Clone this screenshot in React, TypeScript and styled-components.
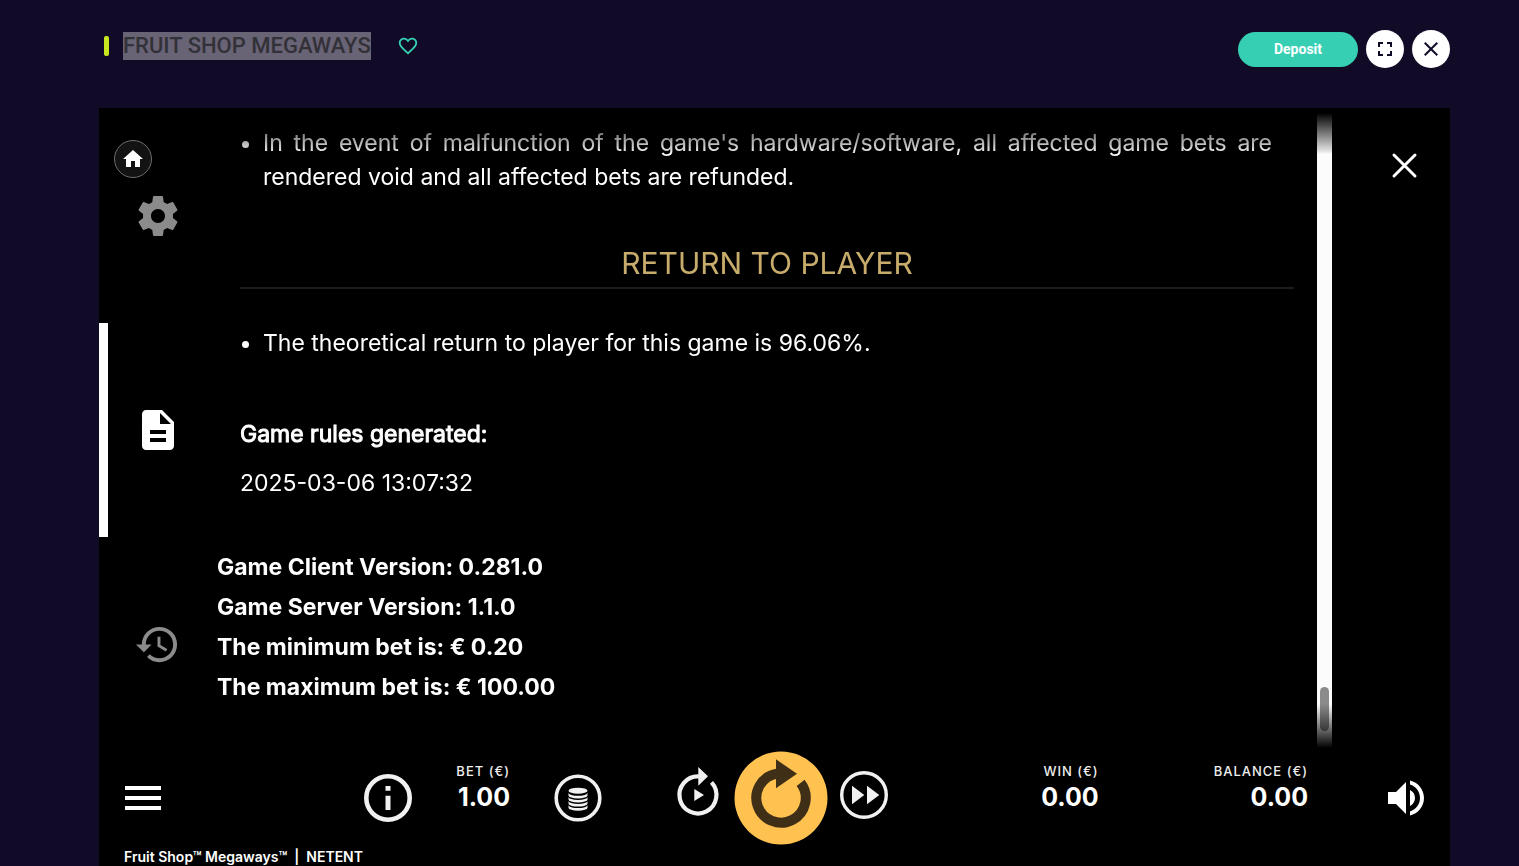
import React from "react";
import styled, { createGlobalStyle } from "styled-components";
import {
  MdClose,
  MdDescription,
  MdFavoriteBorder,
  MdFullscreen,
  MdHistory,
  MdHome,
  MdMenu,
  MdVolumeUp,
} from "react-icons/md";

const GlobalStyle = createGlobalStyle`
  * { box-sizing: border-box; }
  body {
    margin: 0;
    background: #120b28;
    color: #fff;
    font-family: Inter, "Liberation Sans", sans-serif;
  }
  button {
    padding: 0;
    border: 0;
    background: none;
    color: inherit;
    font: inherit;
    cursor: pointer;
  }
  svg { display: block; }
`;

const Page = styled.div`
  display: flex;
  flex-direction: column;
  min-height: 100vh;
  padding: 0 69px 0 99px;
`;

const Header = styled.header`
  display: flex;
  justify-content: space-between;
  align-items: flex-start;
  height: 108px;
  padding: 30px 0 0 5px;
  font-family: Roboto, "Liberation Sans", sans-serif;
`;

const TitleGroup = styled.div`
  display: flex;
  align-items: center;
  height: 32px;
`;

const Accent = styled.span`
  width: 5px;
  height: 20px;
  margin-right: 14px;
  border-radius: 2px;
  background: #c8e71f;
`;

const Title = styled.h1`
  margin: 0 26px 0 0;
  background: #686375;
  color: #333138;
  font-size: 22px;
  font-weight: 500;
  line-height: 28px;
`;

const FavoriteButton = styled.button`
  color: #36cfb4;
`;

const HeaderActions = styled.div`
  display: flex;
  align-items: center;
  gap: 8px;
`;

const DepositButton = styled.button`
  width: 120px;
  height: 35px;
  border-radius: 18px;
  background: #36cfb4;
  font-size: 14px;
  font-weight: 700;
`;

const CircleButton = styled.button`
  display: grid;
  place-items: center;
  width: 38px;
  height: 38px;
  border-radius: 50%;
  background: #fff;
  color: #120b28;
`;

const Game = styled.main`
  position: relative;
  flex: 1;
  display: flex;
  flex-direction: column;
  background: #000;
`;

const HomeButton = styled.button`
  position: absolute;
  top: 32px;
  left: 15px;
  display: grid;
  place-items: center;
  width: 38px;
  height: 38px;
  border: 1px solid #6d6d6d;
  border-radius: 50%;
  background: #131313;
`;

const Rules = styled.div`
  display: grid;
  grid-template-columns: 118px 1fr 118px;
  height: 642px;
`;

const Tabs = styled.nav`
  display: flex;
  flex-direction: column;
  padding-top: 1px;
`;

const Tab = styled.button<{ $active?: boolean }>`
  flex: 0 0 214px;
  display: grid;
  place-items: center;
  border-left: 9px solid ${(p) => (p.$active ? "#fff" : "transparent")};
  padding-right: 10px;
  color: ${(p) => (p.$active ? "#fff" : "#8b8b8b")};
`;

const Scroller = styled.section`
  display: grid;
  grid-template-columns: 1fr 15px;
  mask-image: linear-gradient(
    transparent 5px,
    rgba(0, 0, 0, 0.92) 44px,
    #000 46px,
    #000 596px,
    transparent 640px
  );
`;

const Copy = styled.article`
  padding-top: 18px;
  font-size: 23px;
  line-height: 34px;
`;

const Body = styled.div`
  padding: 0 23px;
`;

const List = styled.ul`
  margin: 0;
  padding: 0 22px 0 23px;
  text-align: justify;
`;

const Heading = styled.h2`
  margin: 48px 0 37px;
  padding-bottom: 2px;
  border-bottom: 2px solid #1c1c1c;
  color: #c8ac6c;
  font-size: 30px;
  font-weight: 400;
  line-height: 43px;
  text-align: center;
`;

const Generated = styled.dl`
  margin: 57px 0 47px;
`;

const GeneratedLabel = styled.dt`
  margin-bottom: 15px;
  -webkit-text-stroke: 1px currentColor;
`;

const GeneratedValue = styled.dd`
  margin: 0;
`;

const Versions = styled.div`
  font-weight: 700;
  line-height: 40px;
`;

const Line = styled.p`
  margin: 0;
`;

const Track = styled.div`
  display: flex;
  align-items: flex-end;
  justify-content: center;
  padding-bottom: 20px;
  background: #fcfcfc;
`;

const Thumb = styled.div`
  width: 9px;
  height: 44px;
  border-radius: 5px;
  background: #8b8b8b;
`;

const CloseColumn = styled.div`
  padding: 44px 0 0 59px;
`;

const Controls = styled.div`
  display: flex;
  align-items: center;
  height: 96px;
  padding: 0 20px;
`;

const LeftControls = styled.div`
  flex: 1;
  display: flex;
  align-items: center;
  gap: 44px;
  padding-right: 59px;
`;

const RightControls = styled.div`
  flex: 1;
  display: flex;
  align-items: center;
  justify-content: flex-end;
  gap: 74px;
  padding-left: 59px;
`;

const MenuButton = styled.button`
  margin-right: auto;
`;

const SpinGroup = styled.div`
  display: flex;
  align-items: center;
  gap: 12px;
  margin-left: 13px;
`;

const RaisedButton = styled.button`
  margin-bottom: 6px;
`;

const Meter = styled.dl<{ $spaced?: boolean }>`
  margin: 0 ${(p) => (p.$spaced ? 41 : 0)}px 18px 0;
  text-align: right;
`;

const MeterLabel = styled.dt`
  font-size: 13px;
  font-weight: 500;
  line-height: 16px;
  letter-spacing: 1px;
  color: #eee;
`;

const MeterValue = styled.dd`
  margin: 0;
  font-size: 25px;
  font-weight: 700;
  line-height: 36px;
`;

const Footer = styled.footer`
  display: flex;
  gap: 7px;
  padding-left: 25px;
  font-size: 14px;
  font-weight: 600;
  line-height: 22px;
`;

const GearIcon = () => (
  <svg width="48" height="48" viewBox="0 0 24 24" fill="currentColor">
    <path d="M19.43 12.98c.04-.32.07-.64.07-.98s-.03-.66-.07-.98l2.11-1.65c.19-.15.24-.42.12-.64l-2-3.46c-.12-.22-.39-.3-.61-.22l-2.49 1c-.52-.4-1.08-.73-1.69-.98l-.38-2.65C14.46 2.18 14.25 2 14 2h-4c-.25 0-.46.18-.49.42l-.38 2.65c-.61.25-1.17.59-1.69.98l-2.49-1c-.23-.09-.49 0-.61.22l-2 3.46c-.13.22-.07.49.12.64l2.11 1.65c-.04.32-.07.65-.07.98s.03.66.07.98l-2.11 1.65c-.19.15-.24.42-.12.64l2 3.46c.12.22.39.3.61.22l2.49-1c.52.4 1.08.73 1.69.98l.38 2.65c.03.24.24.42.49.42h4c.25 0 .46-.18.49-.42l.38-2.65c.61-.25 1.17-.59 1.69-.98l2.49 1c.23.09.49 0 .61-.22l2-3.46c.12-.22.07-.49-.12-.64l-2.11-1.65zM12 15.5c-1.93 0-3.5-1.57-3.5-3.5s1.57-3.5 3.5-3.5 3.5 1.57 3.5 3.5-1.57 3.5-3.5 3.5z" />
  </svg>
);

const CrossIcon = () => (
  <svg width="27" height="27" viewBox="0 0 27 27" stroke="#fff" strokeWidth="3" strokeLinecap="round">
    <path d="M3 3l21 21M24 3L3 24" />
  </svg>
);

const InfoIcon = () => (
  <svg width="48" height="48" viewBox="-24 -24 48 48" fill="#f1f1f1">
    <circle r="21.7" fill="none" stroke="#f1f1f1" strokeWidth="4.6" />
    <path d="M-2.5-12h5v4.7h-5zM-2.5-2.3h5V12h-5z" />
  </svg>
);

const CoinsIcon = () => (
  <svg width="48" height="48" viewBox="-24 -24 48 48" fill="#f1f1f1">
    <circle r="21.8" fill="none" stroke="#f1f1f1" strokeWidth="3.6" />
    <ellipse cy="-7.3" rx="9.5" ry="3" />
    {[-5.2, -1.1, 3, 7.1].map((y) => (
      <path key={y} d={`M-9.5 ${y}A9.5 3 0 0 0 9.5 ${y}v2.6A9.5 3 0 0 1-9.5 ${y + 2.6}z`} />
    ))}
  </svg>
);

const AutoplayIcon = () => (
  <svg width="48" height="58" viewBox="-24 -29 48 58" fill="#f1f1f1">
    <path d="M13.5-12.6A18.5 18.5 0 1 1 1-18.5" fill="none" stroke="#f1f1f1" strokeWidth="4.2" />
    <path d="M.3-28v18.7L10-18.7zM-3.7-6V6L6 0z" />
  </svg>
);

const SpinIcon = () => (
  <svg width="94" height="94" viewBox="-47 -47 94 94">
    <circle r="46.5" fill="#ffc250" />
    <path d="M19.6-15.1A24.7 24.7 0 1 1-4-24.4" fill="none" stroke="#402f17" strokeWidth="10" />
    <path d="M-5-38.7v29L16-24.3z" fill="#402f17" />
  </svg>
);

const FastIcon = () => (
  <svg width="48" height="48" viewBox="-24 -24 48 48" fill="#f1f1f1">
    <circle r="22.3" fill="none" stroke="#f1f1f1" strokeWidth="3.4" />
    <path d="M-12-9.3V9.3L.3 0zM3-9.3V9.3L15.3 0z" />
  </svg>
);

export default function App() {
  return (
    <>
      <GlobalStyle />
      <Page>
        <Header>
          <TitleGroup>
            <Accent />
            <Title>FRUIT SHOP MEGAWAYS</Title>
            <FavoriteButton aria-label="Add to favourites">
              <MdFavoriteBorder size={22} />
            </FavoriteButton>
          </TitleGroup>
          <HeaderActions>
            <DepositButton>Deposit</DepositButton>
            <CircleButton aria-label="Full screen">
              <MdFullscreen size={24} />
            </CircleButton>
            <CircleButton aria-label="Close game">
              <MdClose size={24} />
            </CircleButton>
          </HeaderActions>
        </Header>

        <Game>
          <Rules>
            <Tabs>
              <Tab aria-label="Settings">
                <GearIcon />
              </Tab>
              <Tab $active aria-label="Game rules">
                <MdDescription size={48} />
              </Tab>
              <Tab aria-label="History">
                <MdHistory size={47} />
              </Tab>
            </Tabs>
            <Scroller>
              <Copy>
                <Body>
                  <List>
                    <li>
                      In the event of malfunction of the game's hardware/software, all affected
                      game bets are rendered void and all affected bets are refunded.
                    </li>
                  </List>
                  <Heading>RETURN TO PLAYER</Heading>
                  <List>
                    <li>The theoretical return to player for this game is 96.06%.</li>
                  </List>
                  <Generated>
                    <GeneratedLabel>Game rules generated:</GeneratedLabel>
                    <GeneratedValue>2025-03-06 13:07:32</GeneratedValue>
                  </Generated>
                </Body>
                <Versions>
                  <Line>Game Client Version: 0.281.0</Line>
                  <Line>Game Server Version: 1.1.0</Line>
                  <Line>The minimum bet is: € 0.20</Line>
                  <Line>The maximum bet is: € 100.00</Line>
                </Versions>
              </Copy>
              <Track>
                <Thumb />
              </Track>
            </Scroller>
            <CloseColumn>
              <button aria-label="Close rules">
                <CrossIcon />
              </button>
            </CloseColumn>
          </Rules>

          <Controls>
            <LeftControls>
              <MenuButton aria-label="Menu">
                <MdMenu size={48} />
              </MenuButton>
              <button aria-label="Information">
                <InfoIcon />
              </button>
              <Meter>
                <MeterLabel>BET (€)</MeterLabel>
                <MeterValue>1.00</MeterValue>
              </Meter>
              <button aria-label="Bet settings">
                <CoinsIcon />
              </button>
            </LeftControls>
            <SpinGroup>
              <RaisedButton aria-label="Autoplay">
                <AutoplayIcon />
              </RaisedButton>
              <button aria-label="Spin">
                <SpinIcon />
              </button>
              <RaisedButton aria-label="Fast play">
                <FastIcon />
              </RaisedButton>
            </SpinGroup>
            <RightControls>
              <Meter $spaced>
                <MeterLabel>WIN (€)</MeterLabel>
                <MeterValue>0.00</MeterValue>
              </Meter>
              <Meter>
                <MeterLabel>BALANCE (€)</MeterLabel>
                <MeterValue>0.00</MeterValue>
              </Meter>
              <button aria-label="Sound">
                <MdVolumeUp size={48} />
              </button>
            </RightControls>
          </Controls>
          <Footer>
            <span>Fruit Shop™ Megaways™</span>
            <span>|</span>
            <span>NETENT</span>
          </Footer>

          <HomeButton aria-label="Home">
            <MdHome size={24} />
          </HomeButton>
        </Game>
      </Page>
    </>
  );
}
